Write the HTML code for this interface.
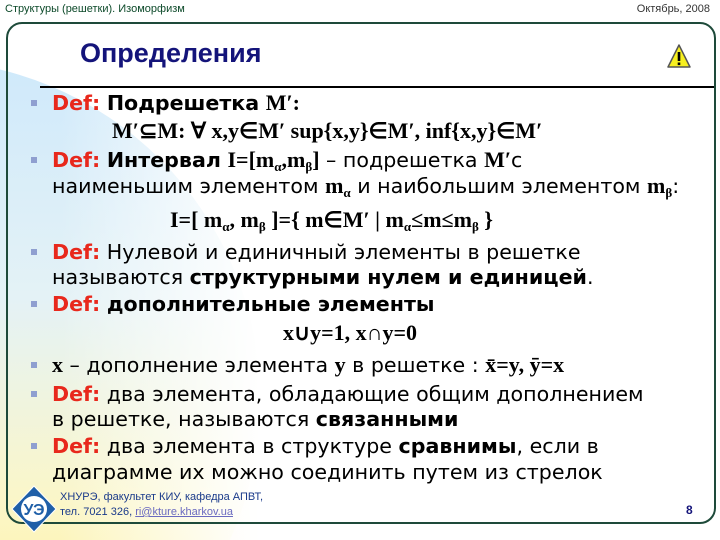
<!DOCTYPE html>
<html style="overflow:hidden;width:720px;height:540px"><head><meta charset="utf-8"><style>
html,body{margin:0;width:720px;height:540px;overflow:hidden;}
body{position:relative;background:#fff;font-family:"DejaVu Sans","Liberation Sans",sans-serif;}
.wrap{position:absolute;left:0;top:0;width:720px;height:540px;overflow:hidden;}
.bg{position:absolute;left:0;top:0;width:720px;height:540px;background:linear-gradient(180deg,#fff 0%,#fff 60%,#fffbe0 100%);}
.circ{position:absolute;left:-420px;top:60px;width:680px;height:680px;border-radius:50%;background:linear-gradient(180deg,#cfe9fb 0%,#e4f2f6 35%,#fbf6c8 65%,#fff3a0 85%);}
.fade{position:absolute;left:0;top:0;width:720px;height:540px;background:linear-gradient(90deg,rgba(255,255,255,0) 0px,rgba(255,255,255,0) 60px,rgba(255,255,255,1) 260px);}
.frame{position:absolute;left:6px;top:22px;width:706px;height:498px;border:2px solid #1e4a3a;border-radius:16px;}
.hdr{position:absolute;top:3px;font:11px "Liberation Sans",sans-serif;}
.t{position:absolute;white-space:nowrap;font-size:20.6px;line-height:26px;color:#000;}
.d{color:#e8281c;font-weight:bold;}
.b{font-weight:bold;}
.s{font-family:"Liberation Serif",serif;font-weight:bold;font-size:22px;}
.bl{position:absolute;left:31px;width:6px;height:6px;background:#8f9fd0;}
sub{font-size:13px;vertical-align:-4px;line-height:0;}
</style></head><body>
<div class="wrap">
<div class="bg"></div><div class="circ"></div><div class="fade"></div>
<div class="hdr" style="left:5px;color:#0d4a2a">Структуры (решетки). Изоморфизм</div>
<div class="hdr" style="right:10px;color:#333">Октябрь, 2008</div>
<div class="frame"></div>
<div style="position:absolute;left:80px;top:38px;font:bold 27px 'Liberation Sans',sans-serif;color:#14147a">Определения</div>
<svg style="position:absolute;left:666px;top:43px" width="26" height="27" viewBox="0 0 26 27"><path d="M13 2 L24 24 L2 24 Z" fill="#f7f020" stroke="#555" stroke-width="1.5" stroke-linejoin="round"/><rect x="11.7" y="9" width="2.6" height="9" fill="#000"/><rect x="11.7" y="19.5" width="2.6" height="2.6" fill="#000"/></svg>
<div style="position:absolute;left:40px;top:86px;width:674px;height:1.5px;background:#000"></div>

<div class="bl" style="top:100px"></div>
<div class="t" style="left:52px;top:90px"><span class="d">Def:</span> <span class="b">Подрешетка</span> <span class="s">M′:</span></div>
<div class="t s" style="left:112px;top:118px">M′⊆M: ∀ x,y∈M′ sup{x,y}∈M′, inf{x,y}∈M′</div>
<div class="bl" style="top:157px"></div>
<div class="t" style="left:52px;top:147px"><span class="d">Def:</span> <span class="b">Интервал</span> <span class="s">I=[m<sub>α</sub>,m<sub>β</sub>]</span> – подрешетка <span class="s">M′</span>с</div>
<div class="t" style="left:52px;top:173px">наименьшим элементом <span class="s">m<sub>α</sub></span> и наибольшим элементом <span class="s">m<sub>β</sub></span>:</div>
<div class="t s" style="left:170px;top:207px">I=[ m<sub>α</sub>, m<sub>β</sub> ]={ m∈M′ | m<sub>α</sub>≤m≤m<sub>β</sub> }</div>
<div class="bl" style="top:249px"></div>
<div class="t" style="left:52px;top:239px"><span class="d">Def:</span> Нулевой и единичный элементы в решетке</div>
<div class="t" style="left:52px;top:264px">называются <span class="b">структурными нулем и единицей</span>.</div>
<div class="bl" style="top:301px"></div>
<div class="t" style="left:52px;top:291px"><span class="d">Def:</span> <span class="b">дополнительные элементы</span></div>
<div class="t s" style="left:283px;top:320px">x∪y=1, x∩y=0</div>
<div class="bl" style="top:362px"></div>
<div class="t" style="left:52px;top:352px"><span class="s">x</span> – дополнение элемента <span class="s">y</span> в решетке : <span class="s">x̄=y, ȳ=x</span></div>
<div class="bl" style="top:391px"></div>
<div class="t" style="left:52px;top:381px"><span class="d">Def:</span> два элемента, обладающие общим дополнением</div>
<div class="t" style="left:52px;top:406px">в решетке, называются <span class="b">связанными</span></div>
<div class="bl" style="top:443px"></div>
<div class="t" style="left:52px;top:433px"><span class="d">Def:</span> два элемента в структуре <span class="b">сравнимы</span>, если в</div>
<div class="t" style="left:52px;top:459px">диаграмме их можно соединить путем из стрелок</div>

<svg style="position:absolute;left:10px;top:484px" width="48" height="50" viewBox="0 0 48 50"><path d="M24 2 L46 25 L24 48 L2 25 Z" fill="#1f5fa8" stroke="#fff" stroke-width="1"/><circle cx="24" cy="25" r="13" fill="#fff"/><text x="24" y="31" text-anchor="middle" font-family="Liberation Sans" font-weight="bold" font-size="16" fill="#1f5fa8">УЭ</text></svg>
<div style="position:absolute;left:60px;top:490px;font:11px 'Liberation Sans',sans-serif;color:#1a3a8a;line-height:15px">ХНУРЭ, факультет КИУ, кафедра АПВТ,<br>тел. 7021 326, <span style="color:#6a6ac0;text-decoration:underline">ri@kture.kharkov.ua</span></div>
<div style="position:absolute;left:686px;top:503px;font:bold 12px 'Liberation Sans',sans-serif;color:#14147a">8</div>
</div>
</body></html>
